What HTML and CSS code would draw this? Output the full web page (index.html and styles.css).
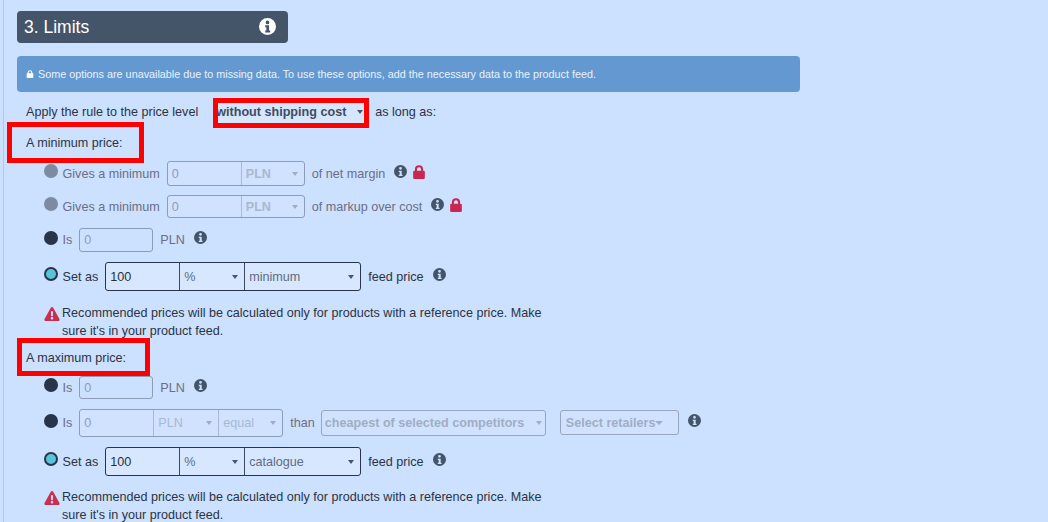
FILE: index.html
```html
<!DOCTYPE html>
<html lang="en">
<head>
    <meta charset="UTF-8">
    <meta name="viewport" content="width=device-width, initial-scale=1.0">
    <title>Limits</title>
    <link rel="stylesheet" href="styles.css">
</head>
<body>
    <svg class="icon-defs" width="0" height="0">
        <symbol id="info" viewBox="0 0 24 24">
            <path fill-rule="evenodd" d="M12 0a12 12 0 1 0 0 24a12 12 0 0 0 0-24zM12 3.6a2.6 2.6 0 1 1 0 5.2a2.6 2.6 0 0 1 0-5.2zM8.8 10.4h5.4v7.4h1.6v2.6H8.8v-2.6h1.6v-4.8H8.8z"/>
        </symbol>
        <symbol id="lock" viewBox="0 0 24 24">
            <path fill-rule="evenodd" d="M5 10V7.5a7 7 0 0 1 14 0V10h1a2 2 0 0 1 2 2v10a2 2 0 0 1-2 2H4a2 2 0 0 1-2-2V12a2 2 0 0 1 2-2zM8.500 10h7V7.500a3.500 3.500 0 0 0-7 0z"/>
        </symbol>
        <symbol id="warn" viewBox="0 0 24 22">
            <path fill-rule="evenodd" d="M12 0c.8 0 1.500.4 1.900 1.100l9.800 17.600c.8 1.500-.3 3.300-1.900 3.300H2.200c-1.600 0-2.700-1.800-1.900-3.300L10.100 1.100C10.500.4 11.200 0 12 0zM10.300 6.500l.4 8h2.600l.4-8zM12 15.700a2 2 0 1 0 0 4a2 2 0 0 0 0-4z"/>
        </symbol>
    </svg>

    <div class="panel">
        <!-- Section header -->
        <div class="section-title">
            <h2>3. Limits</h2>
            <svg class="title-info"><use href="#info"></use></svg>
        </div>

        <div class="alert">
            <svg class="alert-lock"><use href="#lock"></use></svg>
            <span>Some options are unavailable due to missing data. To use these options, add the necessary data to the product feed.</span>
        </div>

        <div class="price-level">
            <span>Apply the rule to the price level</span>
            <div class="level-select">without shipping cost<i class="caret"></i></div>
            <span>as long as:</span>
        </div>

        <!-- Minimum price -->
        <div class="group-label label-min">A minimum price:</div>

        <div class="option option-1">
            <span class="radio radio-off"></span>
            <span class="muted">Gives a minimum</span>
            <div class="combo combo-disabled">
                <input class="combo-input w-73" value="0" disabled>
                <div class="combo-select combo-bold w-63">PLN<i class="caret"></i></div>
            </div>
            <span class="muted">of net margin</span>
            <svg class="info"><use href="#info"></use></svg>
            <svg class="lock"><use href="#lock"></use></svg>
        </div>

        <div class="option option-2">
            <span class="radio radio-off"></span>
            <span class="muted">Gives a minimum</span>
            <div class="combo combo-disabled">
                <input class="combo-input w-73" value="0" disabled>
                <div class="combo-select combo-bold w-63">PLN<i class="caret"></i></div>
            </div>
            <span class="muted">of markup over cost</span>
            <svg class="info"><use href="#info"></use></svg>
            <svg class="lock"><use href="#lock"></use></svg>
        </div>

        <div class="option option-3">
            <span class="radio"></span>
            <span class="muted">Is</span>
            <input class="field" value="0" disabled>
            <span class="muted">PLN</span>
            <svg class="info"><use href="#info"></use></svg>
        </div>

        <div class="option option-4">
            <span class="radio radio-on"></span>
            <span>Set as</span>
            <div class="combo combo-active">
                <input class="combo-input w-73" value="100">
                <div class="combo-select w-65">%<i class="caret"></i></div>
                <div class="combo-select w-116">minimum<i class="caret"></i></div>
            </div>
            <span>feed price</span>
            <svg class="info"><use href="#info"></use></svg>
        </div>

        <div class="warning warning-1">
            <svg class="warn"><use href="#warn"></use></svg>
            <p>Recommended prices will be calculated only for products with a reference price. Make sure it's in your product feed.</p>
        </div>

        <!-- Maximum price -->
        <div class="group-label label-max">A maximum price:</div>

        <div class="option option-5">
            <span class="radio"></span>
            <span class="muted">Is</span>
            <input class="field" value="0" disabled>
            <span class="muted">PLN</span>
            <svg class="info"><use href="#info"></use></svg>
        </div>

        <div class="option option-6">
            <span class="radio"></span>
            <span class="muted">Is</span>
            <div class="combo combo-disabled">
                <input class="combo-input w-73" value="0" disabled>
                <div class="combo-select w-65">PLN<i class="caret"></i></div>
                <div class="combo-select w-64">equal<i class="caret"></i></div>
            </div>
            <span class="muted">than</span>
            <div class="plain-select competitors">cheapest of selected competitors<i class="caret"></i></div>
            <div class="plain-select retailers">Select retailers<i class="caret"></i></div>
            <svg class="info"><use href="#info"></use></svg>
        </div>

        <div class="option option-7">
            <span class="radio radio-on"></span>
            <span>Set as</span>
            <div class="combo combo-active">
                <input class="combo-input w-73" value="100">
                <div class="combo-select w-65">%<i class="caret"></i></div>
                <div class="combo-select w-116">catalogue<i class="caret"></i></div>
            </div>
            <span>feed price</span>
            <svg class="info"><use href="#info"></use></svg>
        </div>

        <div class="warning warning-2">
            <svg class="warn"><use href="#warn"></use></svg>
            <p>Recommended prices will be calculated only for products with a reference price. Make sure it's in your product feed.</p>
        </div>

        <!-- Red annotation boxes drawn over the screenshot -->
        <div class="mark mark-level"></div>
        <div class="mark mark-min"></div>
        <div class="mark mark-max"></div>
    </div>
</body>
</html>
```

FILE: styles.css
```css
html, body {
    margin: 0;
    padding: 0;
    height: 100%;
    overflow: hidden;
}

body {
    background: #cce0ff;
    color: #2b3442;
    font-family: "Liberation Sans", Arial, sans-serif;
    font-size: 12.6px;
}

.icon-defs {
    position: absolute;
}

.panel {
    position: relative;
    margin-left: 3px;
    padding: 11px 0 0 13px;
    height: 100%;
    box-sizing: border-box;
    border-left: 1px solid #b7c6e2;
}

/* Section header */
.section-title {
    display: flex;
    align-items: center;
    justify-content: space-between;
    width: 271px;
    height: 32px;
    padding: 0 12px 0 7px;
    box-sizing: border-box;
    border-radius: 4px;
    background: #445569;
    color: #fff;
}

.section-title h2 {
    margin: 0;
    font-size: 17.500px;
    font-weight: normal;
}

.title-info {
    width: 17px;
    height: 17px;
    margin: 0 0 1px;
    fill: #fff;
}

.alert {
    display: flex;
    align-items: center;
    width: 783px;
    height: 36px;
    margin-top: 13px;
    padding: 0 0 1px 9px;
    box-sizing: border-box;
    border-radius: 4px;
    background: #6399d0;
    color: #e8f2fd;
    font-size: 10.800px;
}

.alert-lock {
    flex: none;
    width: 8px;
    height: 8px;
    margin-right: 4px;
    fill: #fff;
}

.price-level {
    display: flex;
    align-items: center;
    height: 26px;
    margin: 7px 0 0 9px;
}

.level-select {
    display: flex;
    align-items: center;
    align-self: stretch;
    width: 150px;
    margin: 0 11px 0 16px;
    padding-left: 2px;
    box-sizing: border-box;
    background: #d6e6ff;
    color: #3f4d60;
    font-weight: bold;
}

.level-select .caret {
    margin-left: auto;
    margin-right: 1px;
}

.group-label {
    margin-left: 9px;
    line-height: 16px;
}

.label-min {
    margin-top: 10px;
}

.label-max {
    margin-top: 10px;
}

/* Option rows */
.option {
    display: flex;
    align-items: center;
    margin-left: 27px;
}

.option-1 { margin-top: 10px; height: 25px; }
.option-2 { margin-top: 9px; height: 23px; }
.option-3 { margin-top: 10px; height: 24px; }
.option-4 { margin-top: 10px; height: 29px; }
.option-5 { margin-top: 10px; height: 23px; }
.option-6 { margin-top: 10px; height: 28px; }
.option-7 { margin-top: 10px; height: 29px; }

.muted {
    color: #6b6f83;
}

.radio {
    flex: none;
    width: 14px;
    height: 14px;
    margin: -5px 4.500px 0 0;
    border-radius: 50%;
    background: #27344a;
}

.radio-off {
    background: #7c8ba1;
}

.radio-on {
    width: 10px;
    height: 10px;
    border: 2px solid #27344a;
    background: #58c3da;
}

.field,
.combo {
    border: 1px solid #8d9db5;
    border-radius: 3px;
}

.field {
    width: 74px;
    height: 100%;
    margin: 0 7px;
    padding: 0 4px;
    box-sizing: border-box;
    background: transparent;
    color: #8f9db3;
    font: inherit;
}

.combo {
    display: flex;
    align-self: stretch;
    margin: 0 7px;
    box-sizing: border-box;
}

.combo-input {
    height: 100%;
    padding: 0 4px;
    box-sizing: border-box;
    border: 0;
    background: transparent;
    color: #26303e;
    font: inherit;
}

.combo-disabled .combo-input {
    color: #8f9db3;
}

.combo-select {
    display: flex;
    align-items: center;
    height: 100%;
    padding: 0 4px;
    box-sizing: border-box;
    border-left: 1px solid #a9b9d1;
    color: #5f6c80;
}

.combo-select .caret {
    margin-left: auto;
}

.combo-bold {
    font-weight: bold;
}

.combo-disabled {
    background: #d0e2ff;
}

.combo-disabled .combo-select {
    color: #a9b8cf;
}

.combo-disabled .caret,
.plain-select .caret {
    border-top-color: #a0aec4;
}

.combo-active {
    border-color: #27344a;
    background: #d7e7ff;
}

.combo-active .combo-select {
    border-left-color: #3d4b60;
}

.w-73 { width: 73px; }
.w-63 { width: 63px; }
.w-64 { width: 64px; }
.w-65 { width: 65px; }
.w-116 { width: 116px; }

.caret {
    flex: none;
    width: 0;
    height: 0;
    margin-right: 2px;
    border-top: 4px solid #4a5568;
    border-left: 3.500px solid transparent;
    border-right: 3.500px solid transparent;
}

.plain-select {
    display: flex;
    align-items: center;
    box-sizing: border-box;
    height: 26px;
    padding: 0 1px 0 3px;
    border: 1px solid #97a6bd;
    border-radius: 3px;
    background: #d0e2ff;
    color: #a0aec4;
    font-weight: bold;
    white-space: nowrap;
}

.plain-select .caret {
    margin-left: auto;
}

.competitors {
    width: 225px;
    margin: 0 14px 0 6px;
}

.retailers {
    width: 119px;
    height: 25px;
    margin-top: -1px;
    padding-left: 5px;
}

.retailers .caret {
    margin-left: 0;
    border-left-width: 4.500px;
    border-right-width: 4.500px;
}

.info {
    flex: none;
    width: 13px;
    height: 13px;
    margin: -5px 0 0 9px;
    fill: #445569;
}

.lock {
    flex: none;
    width: 14px;
    height: 14px;
    margin: -4px 0 0 5px;
    fill: #c9274f;
}

/* Warning text */
.warning {
    display: flex;
    width: 515px;
    margin-left: 27px;
    line-height: 18px;
}

.warning-1 {
    margin-top: 13px;
}

.warning-2 {
    margin-top: 12px;
}

.warning p {
    margin: 0;
    color: #2b3442;
}

.warn {
    flex: none;
    width: 16px;
    height: 14px;
    margin: 3px 2px 0 0;
    fill: #c9304f;
}

/* Annotations */
.mark {
    position: absolute;
    box-sizing: border-box;
    border: 5px solid #f00;
    pointer-events: none;
}

.mark-level {
    left: 209px;
    top: 98px;
    width: 156px;
    height: 30px;
}

.mark-min {
    left: 3px;
    top: 122px;
    width: 137px;
    height: 41px;
}

.mark-max {
    left: 13px;
    top: 338px;
    width: 133px;
    height: 38px;
}
```
